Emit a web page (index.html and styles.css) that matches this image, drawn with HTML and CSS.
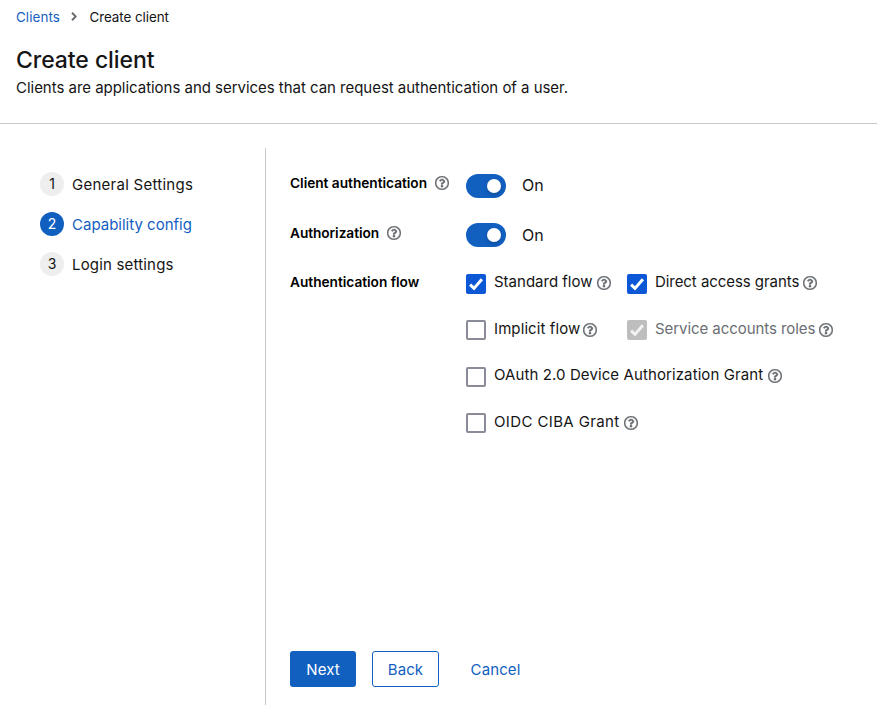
FILE: index.html
```html
<!DOCTYPE html>
<html lang="en">
<head>
<meta charset="utf-8">
<title>Create client</title>
<link rel="stylesheet" href="styles.css">
</head>
<body>
<svg width="0" height="0" class="defs" aria-hidden="true">
  <symbol id="help" viewBox="8 8 496 496"><path d="M256 8C119.043 8 8 119.083 8 256c0 136.997 111.043 248 248 248s248-111.003 248-248C504 119.083 392.957 8 256 8zm0 448c-110.532 0-200-89.431-200-200 0-110.495 89.472-200 200-200 110.491 0 200 89.471 200 200 0 110.53-89.431 200-200 200zm107.244-255.2c0 67.052-72.421 68.084-72.421 92.863V300c0 6.627-5.373 12-12 12h-45.647c-6.627 0-12-5.373-12-12v-8.659c0-35.745 27.1-50.034 47.579-61.516 17.561-9.845 28.324-16.541 28.324-29.579 0-17.246-21.999-28.693-39.784-28.693-23.189 0-33.894 10.977-48.942 29.969-4.057 5.12-11.46 6.071-16.666 2.124l-27.824-21.098c-5.107-3.872-6.251-11.066-2.644-16.363C184.846 131.491 214.94 112 261.794 112c49.071 0 101.45 38.304 101.45 88.8zM298 368c0 23.159-18.841 42-42 42s-42-18.841-42-42 18.841-42 42-42 42 18.841 42 42z"/></symbol>
  <symbol id="check" viewBox="0 0 20 20"><path d="M4.1 10.6 8 14.4 15.9 5.2" fill="none" stroke="currentColor" stroke-width="3"/></symbol>
</svg>
<header class="page-header">
  <nav class="breadcrumb">
    <a class="link">Clients</a>
    <svg class="chevron" viewBox="0 0 6 9"><path d="M1 .8 4.7 4.5 1 8.2" fill="none" stroke="currentColor" stroke-width="2"/></svg>
    <span>Create client</span>
  </nav>
  <h1>Create client</h1>
  <p>Clients are applications and services that can request authentication of a user.</p>
</header>
<main class="wizard">
  <ol class="steps">
    <li><span class="num">1</span><span class="t-wide">General Settings</span></li>
    <li class="current"><span class="num">2</span><span>Capability config</span></li>
    <li><span class="num">3</span><span class="t-mid">Login settings</span></li>
  </ol>
  <section class="panel">
    <div class="form">
      <div class="field">
        <div class="name"><span>Client authentication</span><svg class="help"><use href="#help"/></svg></div>
        <div class="switch"><i></i></div><span class="state">On</span>
      </div>
      <div class="field second">
        <div class="name"><span>Authorization</span><svg class="help"><use href="#help"/></svg></div>
        <div class="switch"><i></i></div><span class="state">On</span>
      </div>
      <div class="field flow">
        <div class="name"><span>Authentication flow</span></div>
        <div class="options">
          <div class="option"><span class="box on"><svg><use href="#check"/></svg></span><span class="label w-standard">Standard flow</span><svg class="help"><use href="#help"/></svg></div>
          <div class="option"><span class="box on"><svg><use href="#check"/></svg></span><span class="label t-tight w-direct">Direct access grants</span><svg class="help"><use href="#help"/></svg></div>
          <div class="option"><span class="box"></span><span class="label t-snug w-implicit">Implicit flow</span><svg class="help"><use href="#help"/></svg></div>
          <div class="option disabled"><span class="box on"><svg><use href="#check"/></svg></span><span class="label t-tight w-service">Service accounts roles</span><svg class="help"><use href="#help"/></svg></div>
          <div class="option wide"><span class="box"></span><span class="label t-snug w-device">OAuth 2.0 Device Authorization Grant</span><svg class="help"><use href="#help"/></svg></div>
          <div class="option wide"><span class="box"></span><span class="label t-loose w-ciba">OIDC CIBA Grant</span><svg class="help"><use href="#help"/></svg></div>
        </div>
      </div>
    </div>
    <footer class="actions">
      <button class="primary">Next</button>
      <button class="secondary">Back</button>
      <button class="plain">Cancel</button>
    </footer>
  </section>
</main>
</body>
</html>
```
FILE: styles.css
```css
* { box-sizing: border-box; }
body {
  margin: 0;
  height: 705px;
  display: flex;
  flex-direction: column;
  overflow: hidden;
  background: #fff;
  color: #151515;
  font: 15px/24px Inter, "Liberation Sans", sans-serif;
  white-space: nowrap;
}
.defs { position: absolute; }
.page-header {
  height: 124px;
  padding: 6px 16px 0;
  border-bottom: 1px solid #c7c7c7;
}
.breadcrumb {
  display: flex;
  align-items: center;
  height: 21px;
  font-size: 13.4px;
  letter-spacing: -.06px;
}
.link { color: #1560c0; width: 44px; letter-spacing: .08px; }
.chevron { width: 6px; height: 9px; margin: -1px 12.5px 0 11px; color: #6a6e73; }
h1 {
  margin: 18px 0 0;
  font-size: 23px;
  line-height: 31px;
  font-weight: 500;
  letter-spacing: -.07px;
}
p { margin: 0; letter-spacing: -.03px; }
.wizard { flex: 1; display: flex; padding-top: 24px; }
.steps {
  width: 265px;
  margin: 0;
  padding: 24px 0 0 40px;
  list-style: none;
}
.steps li { display: flex; gap: 8px; height: 24px; margin-bottom: 16px; line-height: 26px; }
.num {
  width: 24px;
  height: 24px;
  border-radius: 50%;
  background: #eee;
  text-align: center;
  font-size: 14px;
  line-height: 24px;
}
.current { color: #1560c0; }
.current .num { background: #1160c0; color: #fff; }
.t-tight { letter-spacing: -.06px; }
.t-snug { letter-spacing: .1px; }
.t-mid { letter-spacing: .18px; }
.t-wide { letter-spacing: .26px; }
.t-loose { letter-spacing: .38px; }
.panel {
  flex: 1;
  display: flex;
  flex-direction: column;
  justify-content: space-between;
  padding: 25px 0 18px 24px;
  border-left: 1px solid #c7c7c7;
}
.field { display: flex; align-items: flex-start; height: 49px; }
.name {
  width: 176px;
  display: flex;
  gap: 8px;
  align-items: center;
  height: 21px;
  font-size: 13.7px;
  font-weight: 600;
  letter-spacing: -.02px;
  color: #000;
}
.name span { margin-top: -2px; }
.help {
  flex: none;
  width: 14px;
  height: 14px;
  fill: #6a6e73;
  stroke: #6a6e73;
  stroke-width: 10px;
}
.name .help { margin-top: -1px; }
.switch {
  width: 40px;
  height: 24px;
  margin-top: 1px;
  padding: 5px;
  display: flex;
  justify-content: flex-end;
  border-radius: 12px;
  background: #1160c0;
}
.switch i {
  width: 14px;
  height: 14px;
  border-radius: 50%;
  background: #fff;
  box-shadow: 0 2px 4px rgba(0, 0, 0, .2);
}
.state { margin: 0 0 0 16px; font-size: 16px; }
.second .name { margin-top: 1px; letter-spacing: -.06px; }
.second .state { margin-top: 1px; }
.flow { height: auto; }
.flow .name { margin-top: 1px; }
.options {
  display: grid;
  grid-template-columns: 161px auto;
  grid-auto-rows: 46.5px;
}
.option { display: flex; align-items: flex-start; }
.wide { grid-column: 1 / 3; }
.label { line-height: 22px; }
.option .help { margin: 5px 0 0 4px; }
.box {
  width: 20px;
  height: 20px;
  margin: 2.7px 8px 0 0;
  border: 2px solid #8a8b99;
  border-radius: 2px;
}
.box.on { border: 0; background: #0b57d5; color: #fff; }
.box svg { display: block; width: 20px; height: 20px; }
.disabled { color: #6a6e73; }
.disabled .box.on { background: #bebebe; color: #f2f2f2; }
.w-standard { width: 99px; }
.w-direct { width: 144px; }
.w-implicit { width: 85px; }
.w-service { width: 160px; }
.w-device { width: 270px; }
.w-ciba { width: 126px; }
.actions { display: flex; gap: 16px; }
button {
  height: 36px;
  padding: 2px 0 0;
  border: 0;
  border-radius: 3px;
  background: none;
  color: #1160c0;
  font: inherit;
  letter-spacing: .1px;
}
.primary { width: 66px; background: #1160c0; color: #fff; }
.secondary { width: 67px; border: 1px solid #1160c0; }
.plain { width: 81px; }
```
